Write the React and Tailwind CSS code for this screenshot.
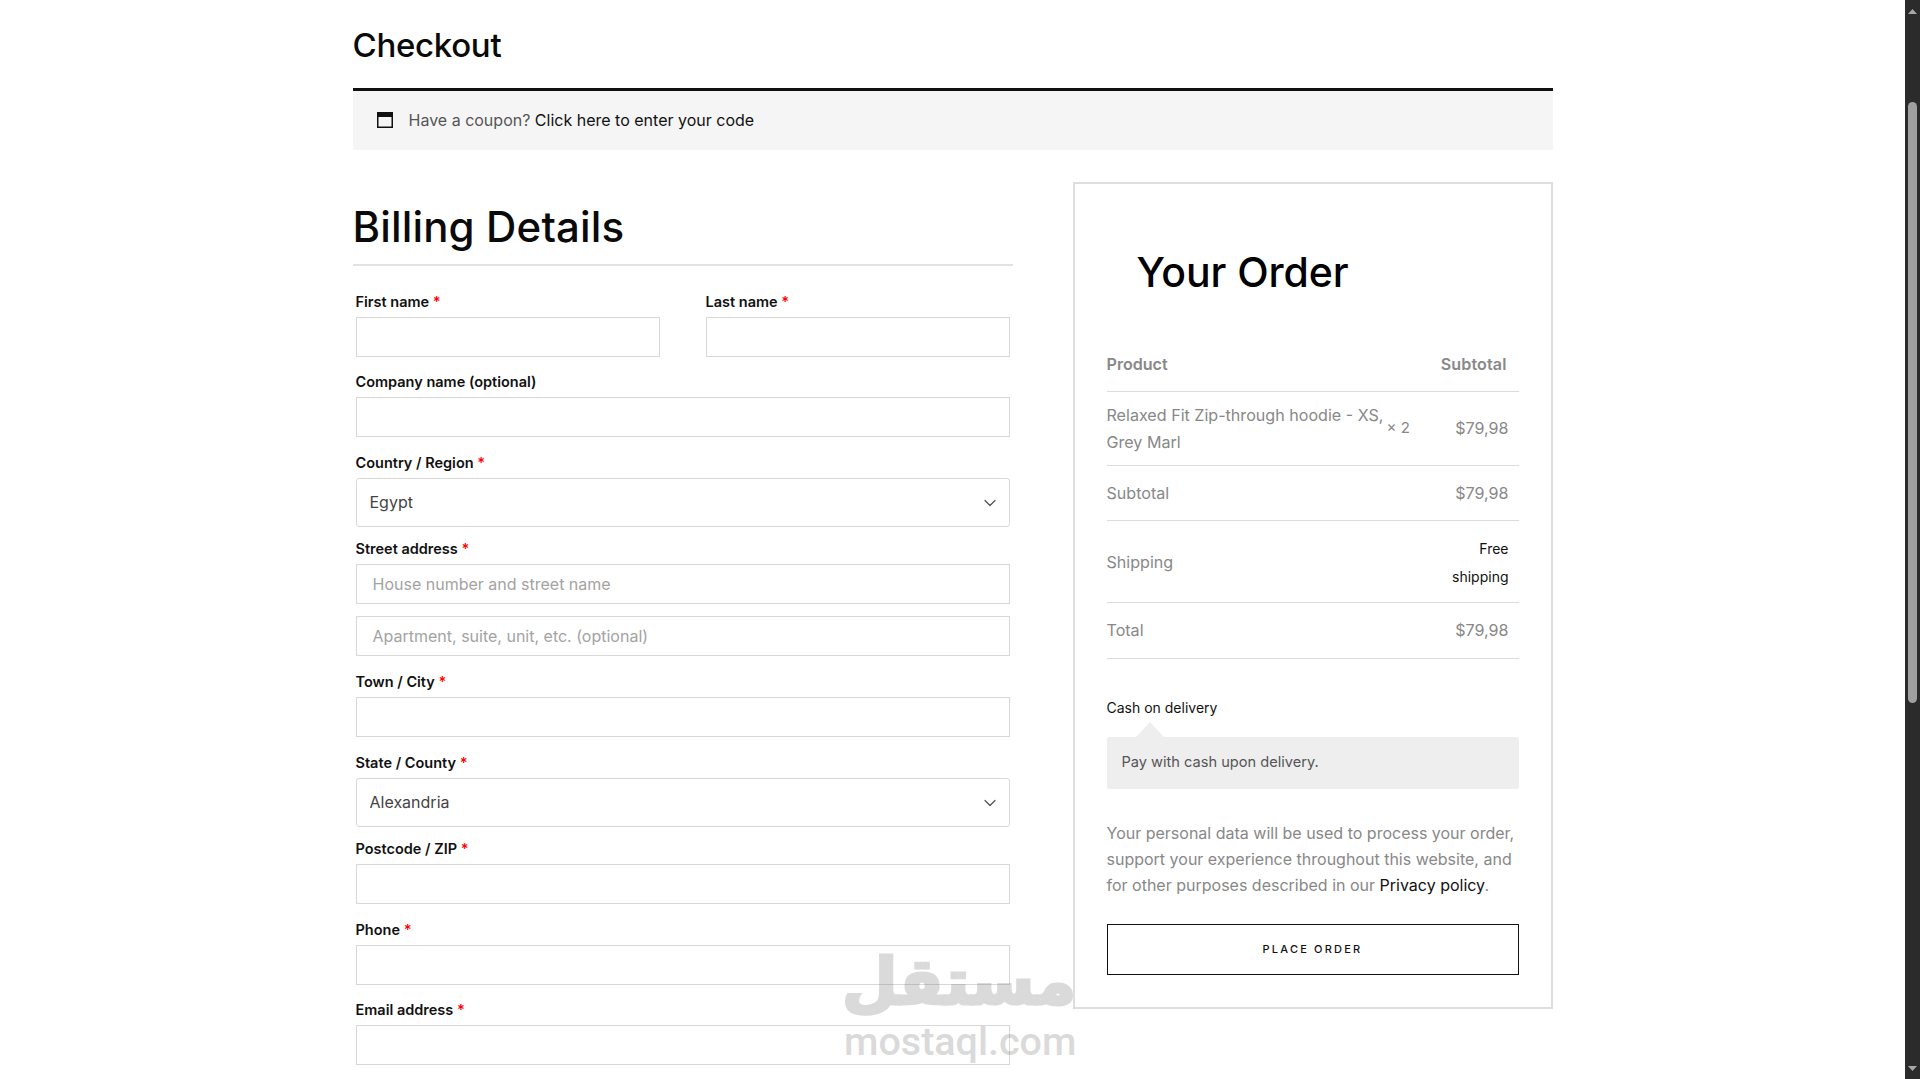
import { ChevronDown } from 'lucide-react'

function Label({ children, required }) {
  return (
    <label className="block h-[22px] mb-[4px] text-[14.5px] leading-[22px] font-semibold text-[#111]">
      {children}
      {required && <span className="text-[#f00]"> *</span>}
    </label>
  )
}

function TextField({ label, required, placeholder, className = 'mb-[15px]' }) {
  return (
    <div className={className}>
      {label && <Label required={required}>{label}</Label>}
      <input
        type="text"
        placeholder={placeholder}
        className="block w-full h-[40px] bg-white border border-[#d8d8d8] pl-[16px] text-[16px] text-[#333] outline-none placeholder:text-[#a3a3a3]"
      />
    </div>
  )
}

function SelectField({ label, value }) {
  return (
    <div className="mb-[11px]">
      <Label required>{label}</Label>
      <div className="relative">
        <select
          defaultValue={value}
          className="block w-full h-[49px] appearance-none bg-white border border-[#d8d8d8] rounded-[3px] pl-[13px] pb-[2px] text-[16px] text-[#444] outline-none"
        >
          <option>{value}</option>
        </select>
        <ChevronDown
          size={20}
          strokeWidth={1.5}
          className="absolute right-[10px] top-[15px] text-[#555]"
        />
      </div>
    </div>
  )
}

function OrderRow({ children, className = '' }) {
  return (
    <div className={`flex items-center justify-between border-b border-[#dcdcdc] text-[16.1px] text-[#888] ${className}`}>
      {children}
    </div>
  )
}

function OrderPanel() {
  return (
    <aside className="w-[480px] h-[827px] border-2 border-[#dedede] px-[32px] pt-[58px]">
      <h2 className="pl-[30px] h-[60px] mb-[37px] text-[41px] leading-[60px] font-medium tracking-[-0.1px] text-black">
        Your Order
      </h2>

      <OrderRow className="h-[53px] pb-[1px] font-semibold">
        <span>Product</span>
        <span className="pr-[12px] tracking-[0.1px]">Subtotal</span>
      </OrderRow>
      <OrderRow className="h-[74px]">
        <span className="w-[280px] leading-[27px]">
          Relaxed Fit Zip-through hoodie - XS,
          <br />
          Grey Marl
        </span>
        <span className="text-[15px] mr-auto">× 2</span>
        <span className="pr-[10px]">$79,98</span>
      </OrderRow>
      <OrderRow className="h-[55px]">
        <span>Subtotal</span>
        <span className="pr-[10px]">$79,98</span>
      </OrderRow>
      <OrderRow className="h-[82px] pt-[2px]">
        <span>Shipping</span>
        <span className="pr-[10px] text-right text-[14px] leading-[28px] text-[#111]">
          Free
          <br />
          shipping
        </span>
      </OrderRow>
      <OrderRow className="h-[56px] pb-[1px]">
        <span>Total</span>
        <span className="pr-[10px]">$79,98</span>
      </OrderRow>

      <div className="mt-[38px] h-[22px] text-[14px] leading-[22px] text-[#111]">Cash on delivery</div>
      <div className="relative mt-[18px] h-[52px] flex items-center pl-[15px] pb-[1px] bg-[#eeeeee] rounded-[2px] text-[14.6px] text-[#555]">
        <span className="absolute left-[29px] -top-[15px] border-x-[14px] border-x-transparent border-b-[15px] border-b-[#eeeeee]" />
        Pay with cash upon delivery.
      </div>

      <p className="mt-[31px] text-[16px] leading-[26px] text-[#888]">
        Your personal data will be used to process your order, support your experience throughout this website, and for other purposes described in our{' '}
        <a className="text-[#111]">Privacy policy</a>.
      </p>

      <button className="mt-[26px] w-full h-[51px] border border-[#111] text-[11px] font-medium tracking-[2.2px] text-[#111]">
        PLACE ORDER
      </button>
    </aside>
  )
}

function BillingForm() {
  return (
    <section className="w-[660px]">
      <h2 className="h-[84px] pt-[15px] border-b-2 border-[#e2e2e2] text-[42px] leading-[60px] font-medium tracking-[0.15px] text-[#0a0a0a]">
        Billing Details
      </h2>
      <div className="w-[654px] ml-[3px] mt-[25px]">
        <div className="flex justify-between">
          <TextField label="First name" required className="w-[304px] mb-[14px]" />
          <TextField label="Last name" required className="w-[304px] mb-[14px]" />
        </div>
        <TextField label="Company name (optional)" />
        <SelectField label="Country / Region" value="Egypt" />
        <TextField label="Street address" required placeholder="House number and street name" className="mb-[12px]" />
        <TextField placeholder="Apartment, suite, unit, etc. (optional)" />
        <TextField label="Town / City" required />
        <SelectField label="State / County" value="Alexandria" />
        <TextField label="Postcode / ZIP" required />
        <TextField label="Phone" required className="mb-[14px]" />
        <TextField label="Email address" required className="mb-[14px]" />
      </div>
    </section>
  )
}

function Scrollbar() {
  return (
    <div className="w-[15px] shrink-0 h-full bg-[#2b2b2b] flex flex-col items-center justify-between pt-[9px] pb-[8px]">
      <svg width="9" height="5" viewBox="0 0 9 5">
        <polygon points="4.5,0 9,5 0,5" fill="#a8a8a8" />
      </svg>
      <div className="w-[9px] h-[601px] mt-[88px] mb-auto bg-[#a0a0a0] rounded-[5px]" />
      <svg width="9" height="5" viewBox="0 0 9 5">
        <polygon points="0,0 9,0 4.5,5" fill="#a8a8a8" />
      </svg>
    </div>
  )
}

export default function App() {
  return (
    <div className="relative flex h-[1079px] overflow-hidden bg-white font-['Inter',sans-serif]">
      <main className="flex-1 overflow-hidden">
        <div className="w-[1200px] mx-auto">
          <h1 className="h-[88px] pt-[25px] text-[33px] leading-[40px] font-medium tracking-[-0.3px] text-[#0a0a0a]">
            Checkout
          </h1>
          <div className="h-[62px] border-t-[3px] border-[#111] bg-[#f5f5f5] flex items-center pl-[24px] pb-[2px] text-[16px] text-[#555]">
            <svg width="16" height="16" viewBox="0 0 16 16" className="mr-[16px] shrink-0">
              <rect x="0.75" y="0.75" width="14.5" height="14.5" fill="none" stroke="#111" strokeWidth="1.5" />
              <rect x="0" y="0" width="16" height="5" fill="#111" />
            </svg>
            <span>
              Have a coupon? <a className="text-[#111]">Click here to enter your code</a>
            </span>
          </div>
          <div className="flex justify-between items-start mt-[32px]">
            <BillingForm />
            <OrderPanel />
          </div>
        </div>
      </main>
      <Scrollbar />

      {/* mostaql watermark */}
      <div className="absolute left-[844px] top-[942px] w-[232px] pointer-events-none text-center text-[#6e6e6e] opacity-25 font-bold">
        <div dir="rtl" className="h-[80px] text-[64px] leading-[80px] font-['DejaVu_Sans',sans-serif] [-webkit-text-stroke:3px_#6e6e6e]">مستقل</div>
        <div className="text-[39.5px] leading-[40px] font-['Roboto',sans-serif] font-medium whitespace-nowrap">mostaql.com</div>
      </div>
    </div>
  )
}
